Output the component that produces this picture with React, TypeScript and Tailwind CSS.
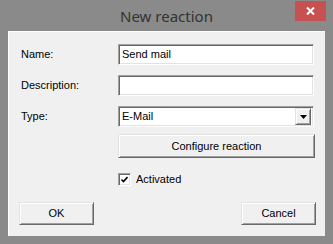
import React from "react";

const font = { fontFamily: '"Liberation Sans", Arial, sans-serif' };

function Sunken({ children, className = "" }: { children?: React.ReactNode; className?: string }) {
  return (
    <div
      className={
        "border border-t-[#a0a0a0] border-l-[#a0a0a0] border-r-white border-b-white bg-white shadow-[inset_1px_1px_0_#696969,inset_-1px_-1px_0_#e3e3e3] " +
        className
      }
    >
      {children}
    </div>
  );
}

function Raised({ children, className = "" }: { children?: React.ReactNode; className?: string }) {
  return (
    <div
      className={
        "border border-t-[#e3e3e3] border-l-[#e3e3e3] border-r-[#696969] border-b-[#696969] bg-[#f0f0f0] shadow-[inset_1px_1px_0_#ffffff,inset_-1px_-1px_0_#a0a0a0] flex items-center justify-center text-[11px] text-black " +
        className
      }
    >
      {children}
    </div>
  );
}

export default function App() {
  return (
    <div className="w-[333px] h-[244px] bg-[#8a8a8a] flex flex-col" style={font}>
      <div className="relative h-[31px] flex items-center justify-center">
        <span
          className="text-[15px] text-[#333333] leading-none mt-[1px]"
          style={{ fontFamily: '"Noto Sans", "Open Sans", sans-serif' }}
        >
          New reaction
        </span>
        <div className="absolute left-[295px] top-[1px] w-[31px] h-[20px] bg-[#c75050] flex items-center justify-center">
          <svg width="9" height="8" viewBox="0 0 9 8">
            <path d="M1 0.5 L8 7.5 M8 0.5 L1 7.5" stroke="white" strokeWidth="2" />
          </svg>
        </div>
      </div>
      <div className="mx-[8px] h-[205px] bg-[#f0f0f0] border-t border-l border-white flex flex-col pl-[11px] pr-[9px] pt-[12px] text-[11px] text-black">
        <div className="flex items-center h-[21px]">
          <span className="w-[98px] pl-[1px]">Name:</span>
          <Sunken className="w-[196px] h-[21px] flex items-center pl-[2px]">
            <span className="pl-[1px]">Send mail</span>
          </Sunken>
        </div>
        <div className="flex items-center h-[21px] mt-[10px]">
          <span className="w-[98px] pl-[1px]">Description:</span>
          <Sunken className="w-[196px] h-[21px]" />
        </div>
        <div className="flex items-center h-[21px] mt-[10px]">
          <span className="w-[98px] pl-[1px]">Type:</span>
          <Sunken className="w-[196px] h-[21px] flex items-center pl-[3px] pr-[2px]">
            <span className="flex-1">E-Mail</span>
            <Raised className="w-[16px] h-[17px]">
              <svg width="7" height="4" viewBox="0 0 7 4">
                <path d="M0 0 H7 L3.5 4 Z" fill="black" />
              </svg>
            </Raised>
          </Sunken>
        </div>
        <div className="flex mt-[7px]">
          <div className="w-[98px]" />
          <Raised className="w-[197px] h-[24px]">Configure reaction</Raised>
        </div>
        <div className="flex items-center mt-[15px] h-[13px]">
          <div className="w-[98px]" />
          <Sunken className="w-[13px] h-[13px] flex items-center justify-center">
            <svg width="7" height="7" viewBox="0 0 7 7">
              <path d="M0.5 3.5 L2.5 5.5 L6.5 1" stroke="black" strokeWidth="1.6" fill="none" />
            </svg>
          </Sunken>
          <span className="ml-[5px]">Activated</span>
        </div>
        <div className="flex justify-between mt-[16px]">
          <Raised className="w-[75px] h-[23px] -ml-[1px]">OK</Raised>
          <Raised className="w-[75px] h-[23px]">Cancel</Raised>
        </div>
      </div>
    </div>
  );
}
